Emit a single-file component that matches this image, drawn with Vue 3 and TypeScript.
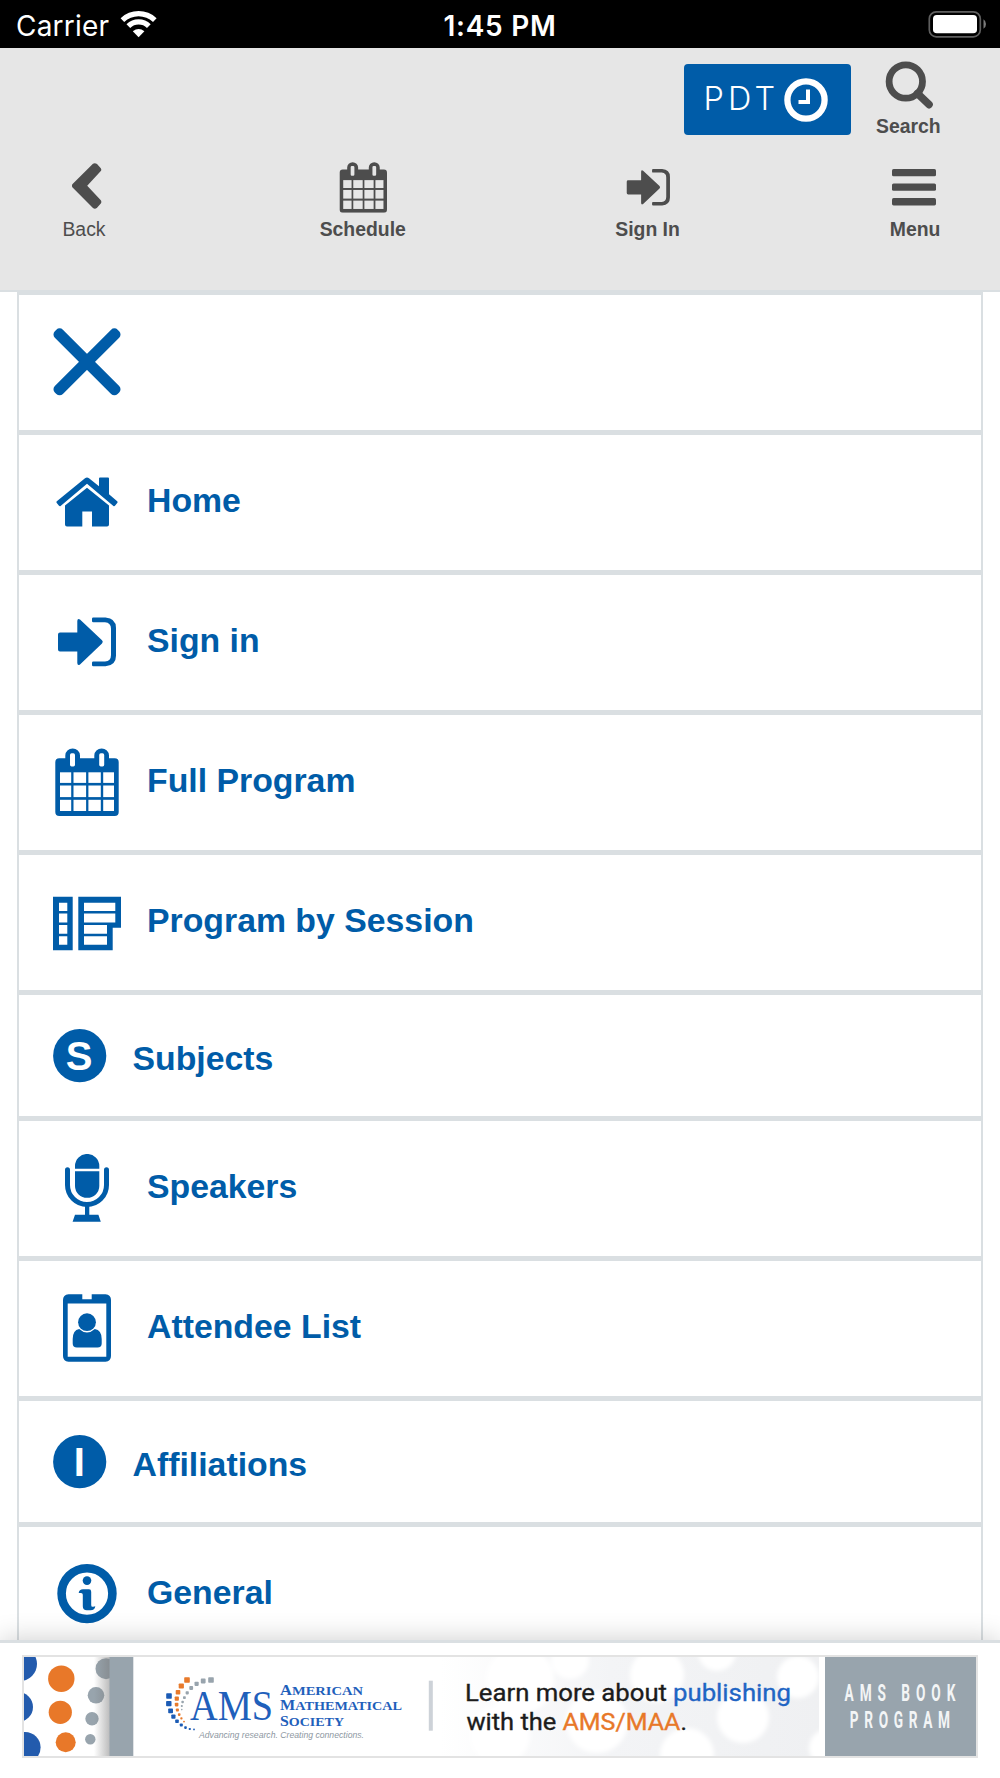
<script setup lang="ts">
interface MenuEntry {
  label: string
  icon: string
  letter?: string
}

interface NavEntry {
  label: string
  icon: string
  bold: boolean
}

const nav: NavEntry[] = [
  { label: 'Back', icon: 'i-back', bold: false },
  { label: 'Schedule', icon: 'i-calendar', bold: true },
  { label: 'Sign In', icon: 'i-signin', bold: true },
  { label: 'Menu', icon: 'i-menu', bold: true },
]

const entries: MenuEntry[] = [
  { label: '', icon: 'i-close' },
  { label: 'Home', icon: 'i-home' },
  { label: 'Sign in', icon: 'i-signin' },
  { label: 'Full Program', icon: 'i-calendar' },
  { label: 'Program by Session', icon: 'i-session' },
  { label: 'Subjects', icon: '', letter: 'S' },
  { label: 'Speakers', icon: 'i-mic' },
  { label: 'Attendee List', icon: 'i-badge' },
  { label: 'Affiliations', icon: '', letter: 'I' },
  { label: 'General', icon: 'i-info' },
]

/* Calendar cells: [start, size] along each axis */
const calX = [[7, 11.2], [20.5, 12.6], [35.4, 12.4], [50.2, 10.8]]
const calY = [[24.3, 10.6], [37.5, 11.6], [51.8, 11.2]]

const logoDots = [
  { c: '#1b5bb5', p: [[169, 1696, 5.6], [168.8, 1703.6, 5.4], [170.6, 1710.8, 4.8], [173.4, 1716.6, 4.2], [177, 1721.3, 3.6], [181.3, 1725, 3], [185.5, 1727.6, 2.6], [189.8, 1729, 2.2], [194, 1729.5, 1.8]] },
  { c: '#e87a2b', p: [[187, 1680, 5.6], [181.3, 1686, 5.2], [178, 1692.3, 4.6], [176.8, 1698.6, 4.2], [176.6, 1704.6, 3.6], [177.4, 1710, 3], [179.2, 1714.6, 2.6], [181.4, 1718.4, 2.2], [184, 1721.6, 1.8]] },
  { c: '#98a4ad', p: [[211, 1680, 5.6], [203.2, 1681, 4.8], [196.6, 1683.8, 4.2], [191.2, 1688, 3.8], [187.2, 1692.8, 3.2], [184.4, 1697.6, 2.8], [182.6, 1702, 2.4], [181.8, 1706, 2], [181.8, 1709.6, 1.6]] },
]
</script>

<template>
  <div class="screen">
    <svg class="defs" width="0" height="0" aria-hidden="true">
      <symbol id="i-back" viewBox="0 0 68 68">
        <path d="M.5 31.5 31 1Q34-.8 37 1.6L42.6 7.6Q44 10 42.6 11.8L22.5 33.8 42.6 55Q44.2 57.6 42.6 60L37 66.2Q34 68.6 31 66.6L.5 36Q-.6 33.8.5 31.5Z" />
      </symbol>
      <symbol id="i-close" viewBox="0 0 68 68">
        <g transform="translate(34 33.8)">
          <rect x="-44.4" y="-5.7" width="88.8" height="11.4" rx="4.6" transform="rotate(45)" />
          <rect x="-44.4" y="-5.7" width="88.8" height="11.4" rx="4.6" transform="rotate(-45)" />
        </g>
      </symbol>
      <symbol id="i-home" viewBox="0 0 68 68">
        <path d="M32 10.2Q34 8.8 36 10.2L46 18.2V10.5Q46 9.5 47 9.5H55Q56 9.5 56 10.5V26.3L64.2 33.2Q65 34 64.4 34.8L62 37.8Q61.3 38.6 60.4 38L34 15.8 7.6 38Q6.8 38.6 6 37.8L3.6 34.8Q3 34 3.8 33.2Z" />
        <path d="M34 19.8 56 37.4V56.5Q56 58.5 54 58.5H39V43.5H29.3V58.5H14Q12 58.5 12 56.5V37.4Z" />
      </symbol>
      <symbol id="i-signin" viewBox="0 0 68 68">
        <path d="M7 24.5H24.3V13Q24.5 10 27 11.6L49 32.2Q50.6 33.8 49 35.4L27 56.4Q24.5 58 24.3 55V43.5H7Q5 43.5 5 41.5V26.5Q5 24.5 7 24.5Z" />
        <path d="M40.3 9.5H52.5Q63 10.2 63 20V47.7Q63 57.5 52.5 58.2H40.3Q39 58.2 39 57V54.7Q39 53.5 40.3 53.5H52Q58 53 58 47V20.7Q58 14.7 52 14.2H40.3Q39 14.2 39 13V10.7Q39 9.5 40.3 9.5Z" />
      </symbol>
      <symbol id="i-calendar" viewBox="0 0 68 68">
        <path fill-rule="evenodd" d="M6.3 10.2H12.3V7.4A7.3 6.9 0 0 1 27 7.4V10.2H41.3V7.4A7.3 6.9 0 0 1 56 7.4V10.2H61.7Q65.7 10.2 65.7 14.2V64Q65.7 68 61.7 68H6.3Q2.3 68 2.3 64V14.2Q2.3 10.2 6.3 10.2ZM17 7V16.8Q17 18.6 18.6 18.6H20.4Q22 18.6 22 16.8V7Q22 5.2 20.4 5.2H18.6Q17 5.2 17 7ZM46.2 7V16.8Q46.2 18.6 47.8 18.6H49.6Q51.2 18.6 51.2 16.8V7Q51.2 5.2 49.6 5.2H47.8Q46.2 5.2 46.2 7Z" />
        <g class="cells">
          <template v-for="y in calY" :key="y[0]">
            <rect v-for="x in calX" :key="x[0]" :x="x[0]" :y="y[0]" :width="x[1]" :height="y[1]" />
          </template>
        </g>
      </symbol>
      <symbol id="i-menu" viewBox="0 0 68 68">
        <rect x="0" y="0" width="68" height="11.3" rx="2.5" />
        <rect x="0" y="22.4" width="68" height="11.3" rx="2.5" />
        <rect x="0" y="45" width="68" height="11.3" rx="2.5" />
      </symbol>
      <symbol id="i-session" viewBox="0 0 68 68">
        <path fill-rule="evenodd" d="M0 8.8H19.7V62.3H0ZM6 14.8V22.9H14.3V14.8ZM6 25.5V34.4H14.3V25.5ZM6 36.9V45.8H14.3V36.9ZM6 48.2V56.8H14.3V48.2Z" />
        <path fill-rule="evenodd" d="M25.3 8.8H68V39.8H59.7V62.3H25.3ZM31 14.8V22.9H62.3V14.8ZM31 25.5V34.4H62.3V25.5ZM31 36.9V45.8H54V36.9ZM31 48.2V56.8H54V48.2Z" />
      </symbol>
      <symbol id="i-mic" viewBox="0 0 68 68">
        <path d="M22 14.8V12A12.1 12 0 0 1 46.3 12V14.8ZM22 17.3H46.3V32A12.1 11.8 0 0 1 22 32Z" />
        <path class="line" d="M14.5 15.7V31A19.5 19.6 0 0 0 53.5 31V15.7" />
        <path d="M32 52H36.3V60.8H45.4L47.8 67.8H19.6L22 60.8H32Z" />
      </symbol>
      <symbol id="i-badge" viewBox="0 0 68 68">
        <path fill-rule="evenodd" d="M15.5.3H29.3V5.2H38.7V.3H52.5Q58 .8 58 6V62Q58 67.2 52.5 67.8H15.5Q10 67.2 10 62V6Q10 .8 15.5.3ZM14.7 9.5V62.8H53.3V9.5Z" />
        <circle cx="34" cy="28.2" r="8.9" />
        <path d="M26.2 34.9Q34 42 41.8 34.9Q48.7 36 48.7 45V49.5Q48.7 53.5 44.5 53.5H23.9Q19.7 53.5 19.7 49.5V45Q19.7 36 26.2 34.9Z" />
      </symbol>
      <symbol id="i-info" viewBox="0 0 68 68">
        <g transform="translate(0 -.7)">
          <circle class="ring" cx="34" cy="34.3" r="25.4" />
          <circle cx="34" cy="21.3" r="4.3" />
          <path d="M25.7 33.6Q26.2 30 30 30H36Q38.2 30 38.2 32.4V45.6Q38.2 47.8 40.2 47.4L42.3 47Q41.8 51 37.6 51H33.8Q29.8 51 29.8 47V35.5Q29.8 33.6 28 33.6Z" />
        </g>
      </symbol>
    </svg>

    <div class="status">
      <div class="carrier">
        <span>Carrier</span>
        <svg width="37" height="28" viewBox="120 10 37 28" fill="#fff">
          <path d="M120.6 18.2A26 26 0 0 1 156.6 18.2L153 22A20.8 20.8 0 0 0 124.2 22Z" />
          <path d="M126.5 24.2A17.4 17.4 0 0 1 150.7 24.2L147 27.9A12 12 0 0 0 130.2 27.9Z" />
          <path d="M132.8 31.3Q138.6 26.9 144.4 31.3L138.6 37.2Z" />
        </svg>
      </div>
      <span class="time">1:45 PM</span>
      <svg class="battery" width="54" height="28" viewBox="928 10 54 28">
        <rect x="929.3" y="11.8" width="51" height="25" rx="7" fill="none" stroke="#5f5f5f" stroke-width="1.7" />
        <rect x="933" y="15" width="44" height="18.2" rx="3.8" fill="#fff" />
      </svg>
      <svg class="nub" width="4" height="10" viewBox="0 0 4 10"><path d="M.5.3Q3 2 3 5T.5 9.7Z" fill="#7b7b7b" /></svg>
    </div>

    <header class="header">
      <div class="tools">
        <button class="zone">
          <span>PDT</span>
          <svg width="44" height="44" viewBox="0 0 44 44" fill="none" stroke="#fff">
            <circle cx="22" cy="22" r="18.6" stroke-width="6.3" />
            <path d="M24 11.5V24H14.5" stroke-width="4" />
          </svg>
        </button>
        <div class="search">
          <svg width="50" height="50" viewBox="884 60 50 50" fill="none" stroke="#4d4d4d">
            <circle cx="905.8" cy="81.5" r="16.7" stroke-width="6.8" />
            <path d="M917.5 93.5 929 104.6" stroke-width="7.6" stroke-linecap="round" />
          </svg>
          <span>Search</span>
        </div>
      </div>
      <nav class="nav">
        <div v-for="n in nav" :key="n.label" class="nav-item" :class="n.icon">
          <svg class="nav-icon"><use :href="'#' + n.icon" /></svg>
          <span :class="{ bold: n.bold }">{{ n.label }}</span>
        </div>
      </nav>
    </header>

    <main class="content">
      <ul class="menu">
        <li v-for="e in entries" :key="e.icon + e.label" class="row" :class="{ short: e.letter }">
          <svg v-if="e.letter" class="letter" width="54" height="54" viewBox="0 0 54 54">
            <circle cx="26.7" cy="26.7" r="26.6" />
            <text x="26.2" y="41.1" text-anchor="middle">{{ e.letter }}</text>
          </svg>
          <svg v-else class="icon" width="68" height="68"><use :href="'#' + e.icon" /></svg>
          <span class="label">{{ e.label }}</span>
        </li>
      </ul>
    </main>

    <footer class="footer">
      <svg class="banner" width="952" height="99" viewBox="24 1657 952 99">
        <defs>
          <linearGradient id="haze" x1="0" x2="1">
            <stop offset="0" stop-color="#fff" />
            <stop offset=".45" stop-color="#f3f4f6" />
            <stop offset="1" stop-color="#eff0f2" />
          </linearGradient>
          <linearGradient id="fold" x1="0" x2="1">
            <stop offset="0" stop-color="#777" stop-opacity="0" />
            <stop offset="1" stop-color="#777" stop-opacity=".5" />
          </linearGradient>
          <filter id="soft"><feGaussianBlur stdDeviation="2" /></filter>
        </defs>
        <rect x="24" y="1657" width="952" height="99" fill="#fff" />
        <rect x="440" y="1657" width="379" height="99" fill="url(#haze)" />
        <g fill="#fff" filter="url(#soft)">
          <circle cx="657" cy="1675" r="27" />
          <circle cx="687" cy="1755" r="27" />
          <circle cx="597" cy="1722" r="31" />
          <circle cx="570" cy="1660" r="19" />
          <circle cx="520" cy="1680" r="34" />
          <circle cx="500" cy="1735" r="30" />
          <circle cx="717" cy="1652" r="19" />
          <circle cx="798" cy="1677" r="21" />
          <circle cx="743" cy="1717" r="26" />
          <circle cx="828" cy="1748" r="19" />
        </g>
        <g fill="#235bad">
          <circle cx="20" cy="1664" r="17" />
          <circle cx="18" cy="1707" r="15" />
          <circle cx="25" cy="1747.5" r="15.6" />
        </g>
        <g fill="#e87829">
          <circle cx="61.3" cy="1678.7" r="13.2" />
          <circle cx="60.3" cy="1712.3" r="11.6" />
          <circle cx="65.7" cy="1742.3" r="10" />
        </g>
        <g fill="#98a4ad">
          <circle cx="106" cy="1668.7" r="10.5" />
          <circle cx="96" cy="1695.3" r="8.3" />
          <circle cx="92" cy="1718.7" r="6.7" />
          <circle cx="90.3" cy="1739.3" r="5.2" />
        </g>
        <rect x="94" y="1657" width="16" height="99" fill="url(#fold)" />
        <rect x="109.5" y="1657" width="23.8" height="99" fill="#98a4ad" />

        <g v-for="g in logoDots" :key="g.c" :fill="g.c">
          <rect v-for="d in g.p" :key="d[0]" :x="d[0] - d[2] / 2" :y="d[1] - d[2] / 2" :width="d[2]" :height="d[2]" rx=".8" />
        </g>
        <g class="serif" fill="#1f60bb">
          <text x="190" y="1720" font-size="42" textLength="83" lengthAdjust="spacingAndGlyphs">AMS</text>
          <g font-weight="bold" font-size="13.4">
            <text x="280" y="1694.8" textLength="83" lengthAdjust="spacingAndGlyphs"><tspan font-size="15.2">A</tspan>MERICAN</text>
            <text x="280" y="1710.4" textLength="122" lengthAdjust="spacingAndGlyphs"><tspan font-size="15.2">M</tspan>ATHEMATICAL</text>
            <text x="280" y="1726" textLength="64" lengthAdjust="spacingAndGlyphs"><tspan font-size="15.2">S</tspan>OCIETY</text>
          </g>
        </g>
        <text class="sans" x="199" y="1737.6" font-size="8.4" font-style="italic" fill="#8d979f" textLength="165" lengthAdjust="spacingAndGlyphs">Advancing research. Creating connections.</text>
        <rect x="428.8" y="1680.7" width="4" height="50" fill="#cdd2d8" />
        <g class="roboto" font-size="24.4">
          <g fill="#1c1c1c" stroke="#1c1c1c" stroke-width=".35">
            <text x="465" y="1700.7" textLength="202" lengthAdjust="spacingAndGlyphs">Learn more about</text>
            <text x="466.4" y="1730" textLength="90" lengthAdjust="spacingAndGlyphs">with the</text>
            <text x="680.5" y="1730">.</text>
          </g>
          <text x="673" y="1700.7" fill="#1f65c4" stroke="#1f65c4" stroke-width=".35" textLength="118" lengthAdjust="spacingAndGlyphs">publishing</text>
          <text x="562.4" y="1730" fill="#e87829" stroke="#e87829" stroke-width=".35" textLength="118" lengthAdjust="spacingAndGlyphs">AMS/MAA</text>
        </g>
        <rect x="825" y="1657" width="151" height="99" fill="#98a4ad" />
        <g class="roboto" font-size="24.4" font-weight="700" fill="#f3f5f6">
          <text transform="translate(844.5 1700.6) scale(.56 1)" textLength="198">AMS BOOK</text>
          <text transform="translate(849.8 1728) scale(.56 1)" textLength="179">PROGRAM</text>
        </g>
      </svg>
    </footer>
  </div>
</template>

<style>
body {
  margin: 0;
  background: #fff;
}
</style>

<style scoped>
.screen {
  width: 1000px;
  height: 1778px;
  display: flex;
  flex-direction: column;
  overflow: hidden;
  background: #fff;
  font-family: "Liberation Sans", Arial, sans-serif;
}
.defs {
  position: absolute;
}
.cells {
  fill: var(--cell, #fff);
}
.line {
  fill: none;
  stroke: currentColor;
  stroke-width: 5;
  stroke-linecap: round;
}
.ring {
  fill: none;
  stroke: currentColor;
  stroke-width: 8.6;
}

.status {
  position: relative;
  flex: none;
  height: 48px;
  display: flex;
  align-items: center;
  justify-content: center;
  background: #000;
  color: #fff;
  font-family: Inter, sans-serif;
  font-size: 28px;
  line-height: 34px;
}
.carrier {
  position: absolute;
  left: 16px;
  top: 8.5px;
  display: flex;
  align-items: center;
}
.carrier span {
  width: 104px;
  letter-spacing: 0.2px;
}
.carrier svg {
  margin-top: -3px;
}
.time {
  font-weight: 600;
  letter-spacing: 0.7px;
  padding-top: 3px;
}
.battery {
  position: absolute;
  left: 928px;
  top: 10px;
}
.nub {
  position: absolute;
  left: 983px;
  top: 19px;
}

.header {
  flex: none;
  box-sizing: border-box;
  height: 244px;
  border-bottom: 2px solid #dadfe2;
  background: #e6e6e6;
  color: #4d4d4d;
  font-size: 19.4px;
  line-height: 22px;
}
.tools {
  display: flex;
  justify-content: flex-end;
  padding: 16px 59px 0 0;
  height: 98px;
  box-sizing: border-box;
}
.zone {
  display: flex;
  align-items: center;
  width: 167px;
  height: 71px;
  margin-right: 25px;
  padding: 0 0 0 19.5px;
  border: 0;
  border-radius: 4px;
  background: #005ca8;
  color: #fff;
  font: 300 32.4px/40px Inter, sans-serif;
  letter-spacing: 4.2px;
}
.zone span {
  width: 80px;
  margin-top: -1px;
  text-align: left;
}
.zone svg {
  margin-top: 1px;
}
.search {
  display: flex;
  flex-direction: column;
  width: 65px;
  font-weight: bold;
}
.search svg {
  margin: -4px 0 0 8px;
}
.search span {
  margin-top: 5px;
}
.nav {
  display: flex;
  justify-content: space-between;
  padding: 16px 59.5px 0 61px;
}
.nav-item {
  display: flex;
  flex-direction: column;
  align-items: center;
  height: 80px;
}
.nav-icon {
  display: block;
  width: 50.7px;
  height: 50.7px;
  margin-bottom: 5.3px;
  --cell: #e6e6e6;
  fill: currentColor;
}
.i-back .nav-icon {
  width: 46px;
  height: 46px;
  margin: 0.5px -11px 9.5px 11px;
}
.nav-item.i-calendar {
  margin: 0 -2px 0 2px;
}
.i-calendar .nav-icon {
  margin-left: 2px;
}
.nav-item.i-signin {
  margin: 0 -0.7px 0 0.7px;
}
.i-signin .nav-icon {
  margin-left: 1.5px;
}
.i-menu .nav-icon {
  width: 44px;
  height: 44px;
  margin: 7px 2px 5px 0;
}
.bold {
  font-weight: bold;
}

.content {
  flex: none;
  height: 1348px;
  overflow: hidden;
}
.menu {
  list-style: none;
  margin: 0 17px;
  padding: 0;
  border: solid #dadfe2;
  border-width: 3px 2px 0;
}
.row {
  display: flex;
  align-items: center;
  height: 135px;
  padding-left: 34px;
  border-bottom: 5px solid #dadfe2;
  color: #005ca8;
}
.row.short {
  height: 121px;
}
.icon {
  flex: none;
  margin-top: -1px;
  fill: currentColor;
}
.label {
  margin: -6px 0 0 26px;
  font-size: 33.8px;
  line-height: 40px;
  font-weight: bold;
}
.short .label {
  margin: 5px 0 0 25.5px;
}
.letter {
  flex: none;
  fill: #005ca8;
}
.letter text {
  fill: #fff;
  font: bold 40px "Liberation Sans", Arial, sans-serif;
}

.footer {
  position: relative;
  flex: none;
  box-sizing: border-box;
  height: 138px;
  border-top: 3px solid #dadfe2;
  padding: 12px 22px 0;
  background: #fff;
  box-shadow: 0 0 26px rgba(0, 0, 0, 0.2);
}
.banner {
  display: block;
  border: 2px solid #e3e3e3;
}
.serif {
  font-family: "Liberation Serif", serif;
}
.sans {
  font-family: "Liberation Sans", sans-serif;
}
.roboto {
  font-family: Roboto, sans-serif;
}
</style>
